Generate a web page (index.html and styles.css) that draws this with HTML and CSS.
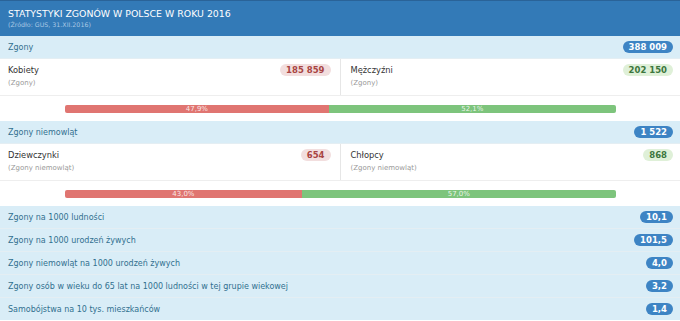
FILE: index.html
```html
<!DOCTYPE html>
<html lang="pl">
<head>
<meta charset="utf-8">
<title>Statystyki zgonów w Polsce w roku 2016</title>
<link rel="stylesheet" href="styles.css">
</head>
<body>
<div class="panel">
  <div class="panel-heading">
    <h1 class="title">STATYSTYKI ZGONÓW W POLSCE W ROKU 2016</h1>
    <div class="source">(Źródło: GUS, 31.XII.2016)</div>
  </div>
  <ul class="list">
    <li class="item info"><span>Zgony</span><span class="badge blue">388 009</span></li>
    <li class="split">
      <div class="cell">
        <div class="labels"><div class="name">Kobiety</div><div class="sub">(Zgony)</div></div>
        <span class="badge red">185 859</span>
      </div>
      <div class="cell">
        <div class="labels"><div class="name">Mężczyźni</div><div class="sub">(Zgony)</div></div>
        <span class="badge green">202 150</span>
      </div>
    </li>
    <li class="bar-row">
      <div class="bar">
        <div class="seg seg-red" style="width:47.9%">47,9%</div>
        <div class="seg seg-green" style="width:52.1%">52,1%</div>
      </div>
    </li>
    <li class="item info"><span>Zgony niemowląt</span><span class="badge blue">1 522</span></li>
    <li class="split">
      <div class="cell">
        <div class="labels"><div class="name">Dziewczynki</div><div class="sub">(Zgony niemowląt)</div></div>
        <span class="badge red">654</span>
      </div>
      <div class="cell">
        <div class="labels"><div class="name">Chłopcy</div><div class="sub">(Zgony niemowląt)</div></div>
        <span class="badge green">868</span>
      </div>
    </li>
    <li class="bar-row">
      <div class="bar">
        <div class="seg seg-red" style="width:43%">43,0%</div>
        <div class="seg seg-green" style="width:57%">57,0%</div>
      </div>
    </li>
    <li class="item info"><span>Zgony na 1000 ludności</span><span class="badge blue">10,1</span></li>
    <li class="item info"><span>Zgony na 1000 urodzeń żywych</span><span class="badge blue">101,5</span></li>
    <li class="item info"><span>Zgony niemowląt na 1000 urodzeń żywych</span><span class="badge blue">4,0</span></li>
    <li class="item info"><span>Zgony osób w wieku do 65 lat na 1000 ludności w tej grupie wiekowej</span><span class="badge blue">3,2</span></li>
    <li class="item info last"><span>Samobójstwa na 10 tys. mieszkańców</span><span class="badge blue">1,4</span></li>
  </ul>
</div>
</body>
</html>
```
FILE: styles.css
```css
html, body {
  margin: 0;
  padding: 0;
  background: #ffffff;
}
body {
  font-family: "DejaVu Sans", Verdana, sans-serif;
  font-size: 8px;
  color: #333333;
}
.panel {
  width: 680px;
}
.panel-heading {
  background: #337ab7;
  border-top: 1px solid #2a6398;
  padding: 6px 8px 7px;
  color: #ffffff;
}
.title {
  margin: 0;
  font-size: 9.4px;
  font-weight: normal;
  line-height: 13px;
}
.source {
  font-size: 6.3px;
  line-height: 9px;
  color: #a9c8e4;
}
.list {
  list-style: none;
  margin: 0;
  padding: 0;
}
.item {
  display: flex;
  align-items: center;
  justify-content: space-between;
  height: 22px;
  padding: 0 7px 0 8px;
  border-bottom: 1px solid #e4eef3;
}
.item.last {
  border-bottom: 0;
}
.info {
  background: #d9edf7;
  color: #31708f;
}
.badge {
  display: inline-block;
  font-weight: bold;
  font-size: 8.5px;
  line-height: 9px;
  padding: 1.5px 6px;
  border-radius: 10px;
}
.blue {
  background: #3d84c4;
  color: #ffffff;
}
.red {
  background: #f2dede;
  color: #a94442;
}
.green {
  background: #dff0d8;
  color: #3c763d;
}
.split {
  display: flex;
  border-bottom: 1px solid #eeeeee;
}
.cell {
  flex: 1;
  display: flex;
  justify-content: space-between;
  align-items: flex-start;
  height: 36px;
  box-sizing: border-box;
  padding: 5px 9px 0 8px;
}
.cell + .cell {
  border-left: 1px solid #e6e6e6;
  padding-left: 10px;
  padding-right: 7px;
}
.name {
  line-height: 13px;
  font-size: 8.3px;
}
.sub {
  line-height: 13px;
  font-size: 7px;
  color: #999999;
}
.bar-row {
  height: 25px;
  box-sizing: border-box;
  padding-top: 9px;
}
.bar {
  width: 81%;
  margin: 0 auto 0 65px;
  height: 8px;
  display: flex;
  border-radius: 2px;
  overflow: hidden;
}
.seg {
  height: 8px;
  line-height: 8px;
  font-size: 7px;
  text-align: center;
  color: rgba(255, 255, 255, 0.85);
}
.seg-red {
  background: #e07571;
}
.seg-green {
  background: #7dc47c;
}
```
